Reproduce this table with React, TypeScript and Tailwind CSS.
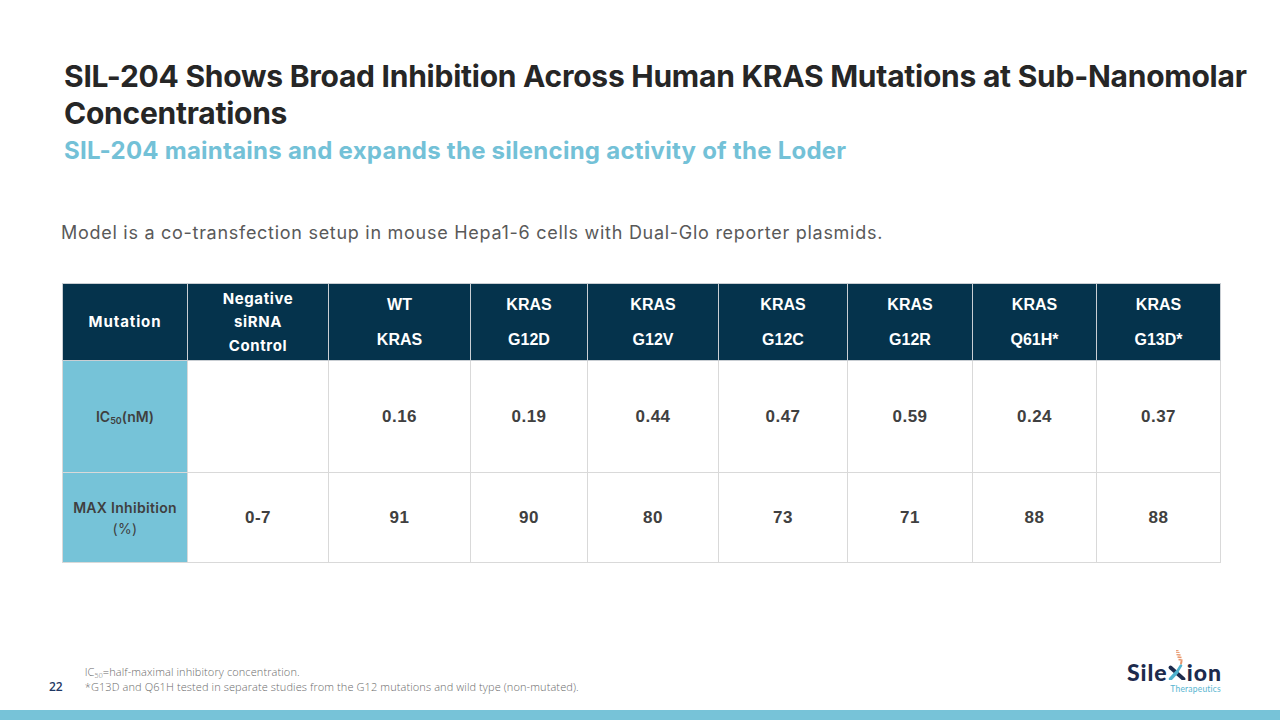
import React from "react";

const headFont = { fontFamily: "Inter, 'Noto Sans', sans-serif" };

const cols = [125, 141, 142, 117, 131, 129, 125, 124, 124];

const heads: string[][] = [
  ["WT", "KRAS"],
  ["KRAS", "G12D"],
  ["KRAS", "G12V"],
  ["KRAS", "G12C"],
  ["KRAS", "G12R"],
  ["KRAS", "Q61H*"],
  ["KRAS", "G13D*"],
];

const ic50 = ["", "0.16", "0.19", "0.44", "0.47", "0.59", "0.24", "0.37"];
const maxInh = ["0-7", "91", "90", "80", "73", "71", "88", "88"];

function Logo() {
  return (
    <div className="flex flex-col items-end">
      <div className="flex items-end text-[#1c2b4d] text-[23px] leading-[24px] font-black tracking-[1px] font-['Lato',sans-serif]">
        <span>Sile</span>
        <svg width="18" height="30" viewBox="0 0 18 30" className="mb-[4px] mr-[1px]">
          <line x1="2.5" y1="17.5" x2="15.5" y2="29" stroke="#1c2b4d" strokeWidth="3.8" strokeLinecap="round" />
          <line x1="2.5" y1="29" x2="9" y2="22" stroke="#4fb3cf" strokeWidth="3.4" strokeLinecap="round" />
          <line x1="9.5" y1="21" x2="13" y2="15.5" stroke="#4fb3cf" strokeWidth="2.6" strokeLinecap="round" />
          <line x1="13" y1="13.5" x2="13.5" y2="11.5" stroke="#e8966a" strokeWidth="2" strokeLinecap="round" />
          <line x1="10.5" y1="9.5" x2="14.5" y2="10.3" stroke="#e8966a" strokeWidth="1.5" />
          <line x1="9.5" y1="7" x2="13.5" y2="7.6" stroke="#e8966a" strokeWidth="1.5" />
          <line x1="8.5" y1="4.6" x2="12.5" y2="5" stroke="#e8966a" strokeWidth="1.3" />
          <line x1="8" y1="2.3" x2="11.5" y2="2.5" stroke="#e8966a" strokeWidth="1.1" />
          <line x1="8" y1="0.6" x2="10.5" y2="0.6" stroke="#e8966a" strokeWidth="1" />
        </svg>
        <span>ion</span>
      </div>
      <div className="text-[8.5px] leading-[9px] text-[#58b5d1] font-['Lato',sans-serif] mr-[1px] mt-[1px] tracking-[0.2px]">
        Therapeutics
      </div>
    </div>
  );
}

export default function App() {
  return (
    <div className="w-[1280px] h-[720px] bg-white flex flex-col overflow-hidden">
      <div className="pl-[64px] pt-[58px]" style={headFont}>
        <h1 className="text-[30px] leading-[37px] font-bold text-[#262626] tracking-[-0.25px]">
          SIL-204 Shows Broad Inhibition Across Human KRAS Mutations at Sub-Nanomolar
          <br />
          Concentrations
        </h1>
        <h2 className="text-[24px] leading-[30px] font-bold text-[#73c1d7] tracking-[0.25px] mt-[4px]">
          SIL-204 maintains and expands the silencing activity of the Loder
        </h2>
      </div>

      <p
        className="pl-[61px] mt-[55px] text-[18px] leading-[24px] text-[#595959] tracking-[0.72px]"
        style={headFont}
      >
        Model is a co-transfection setup in mouse Hepa1-6 cells with Dual-Glo reporter plasmids.
      </p>

      <div className="pl-[62px] mt-[38px]">
        <table className="table-fixed border-collapse w-[1158px] font-['Liberation_Sans',Arial,sans-serif]">
          <colgroup>
            {cols.map((w, i) => (
              <col key={i} style={{ width: w }} />
            ))}
          </colgroup>
          <thead>
            <tr className="h-[77px] bg-[#05334c] text-white">
              <th className="border border-[#c9ced3] text-[15px] font-bold tracking-[0.9px]" style={headFont}>
                Mutation
              </th>
              <th
                className="border border-[#c9ced3] text-[15px] font-bold leading-[23.5px] tracking-[0.6px]"
                style={headFont}
              >
                Negative
                <br />
                siRNA
                <br />
                Control
              </th>
              {heads.map((h, i) => (
                <th key={i} className="border border-[#c9ced3] text-[16px] font-bold">
                  <div className="flex flex-col items-center gap-[16px] leading-[19px]">
                    <span>{h[0]}</span>
                    <span>{h[1]}</span>
                  </div>
                </th>
              ))}
            </tr>
          </thead>
          <tbody>
            <tr className="h-[112px]">
              <td
                className="border border-[#d9d9d9] bg-[#76c3d8] text-center text-[14px] font-semibold text-[#3f3f3f]"
                style={headFont}
              >
                IC<sub className="text-[9px]">50</sub>(nM)
              </td>
              {ic50.map((v, i) => (
                <td
                  key={i}
                  className="border border-[#d9d9d9] text-center text-[17px] font-bold text-[#404040] tracking-[0.5px]"
                >
                  {v}
                </td>
              ))}
            </tr>
            <tr className="h-[90px]">
              <td
                className="border border-[#d9d9d9] bg-[#76c3d8] text-center text-[14px] leading-[21px] text-[#3f3f3f] tracking-[0.3px]"
                style={headFont}
              >
                <span className="font-semibold">MAX Inhibition</span>
                <br />
                <span>(%)</span>
              </td>
              {maxInh.map((v, i) => (
                <td
                  key={i}
                  className="border border-[#d9d9d9] text-center text-[17px] font-bold text-[#404040] tracking-[0.5px]"
                >
                  {v}
                </td>
              ))}
            </tr>
          </tbody>
        </table>
      </div>

      <div className="flex-1" />

      <div className="flex items-end justify-between pl-[49px] pr-[58px] pb-[16px]">
        <div className="flex items-end gap-[22px] font-['Open_Sans',sans-serif]">
          <span className="text-[12px] leading-[15px] font-semibold text-[#1f3864]">22</span>
          <div className="text-[11px] leading-[15px] font-light text-[#6b6b6b] tracking-[0.1px]">
            <div>
              IC<sub className="text-[7px]">50</sub>=half-maximal inhibitory concentration.
            </div>
            <div>*G13D and Q61H tested in separate studies from the G12 mutations and wild type (non-mutated).</div>
          </div>
        </div>
        <Logo />
      </div>

      <div className="h-[10px] bg-[#77c3d8]" />
    </div>
  );
}
